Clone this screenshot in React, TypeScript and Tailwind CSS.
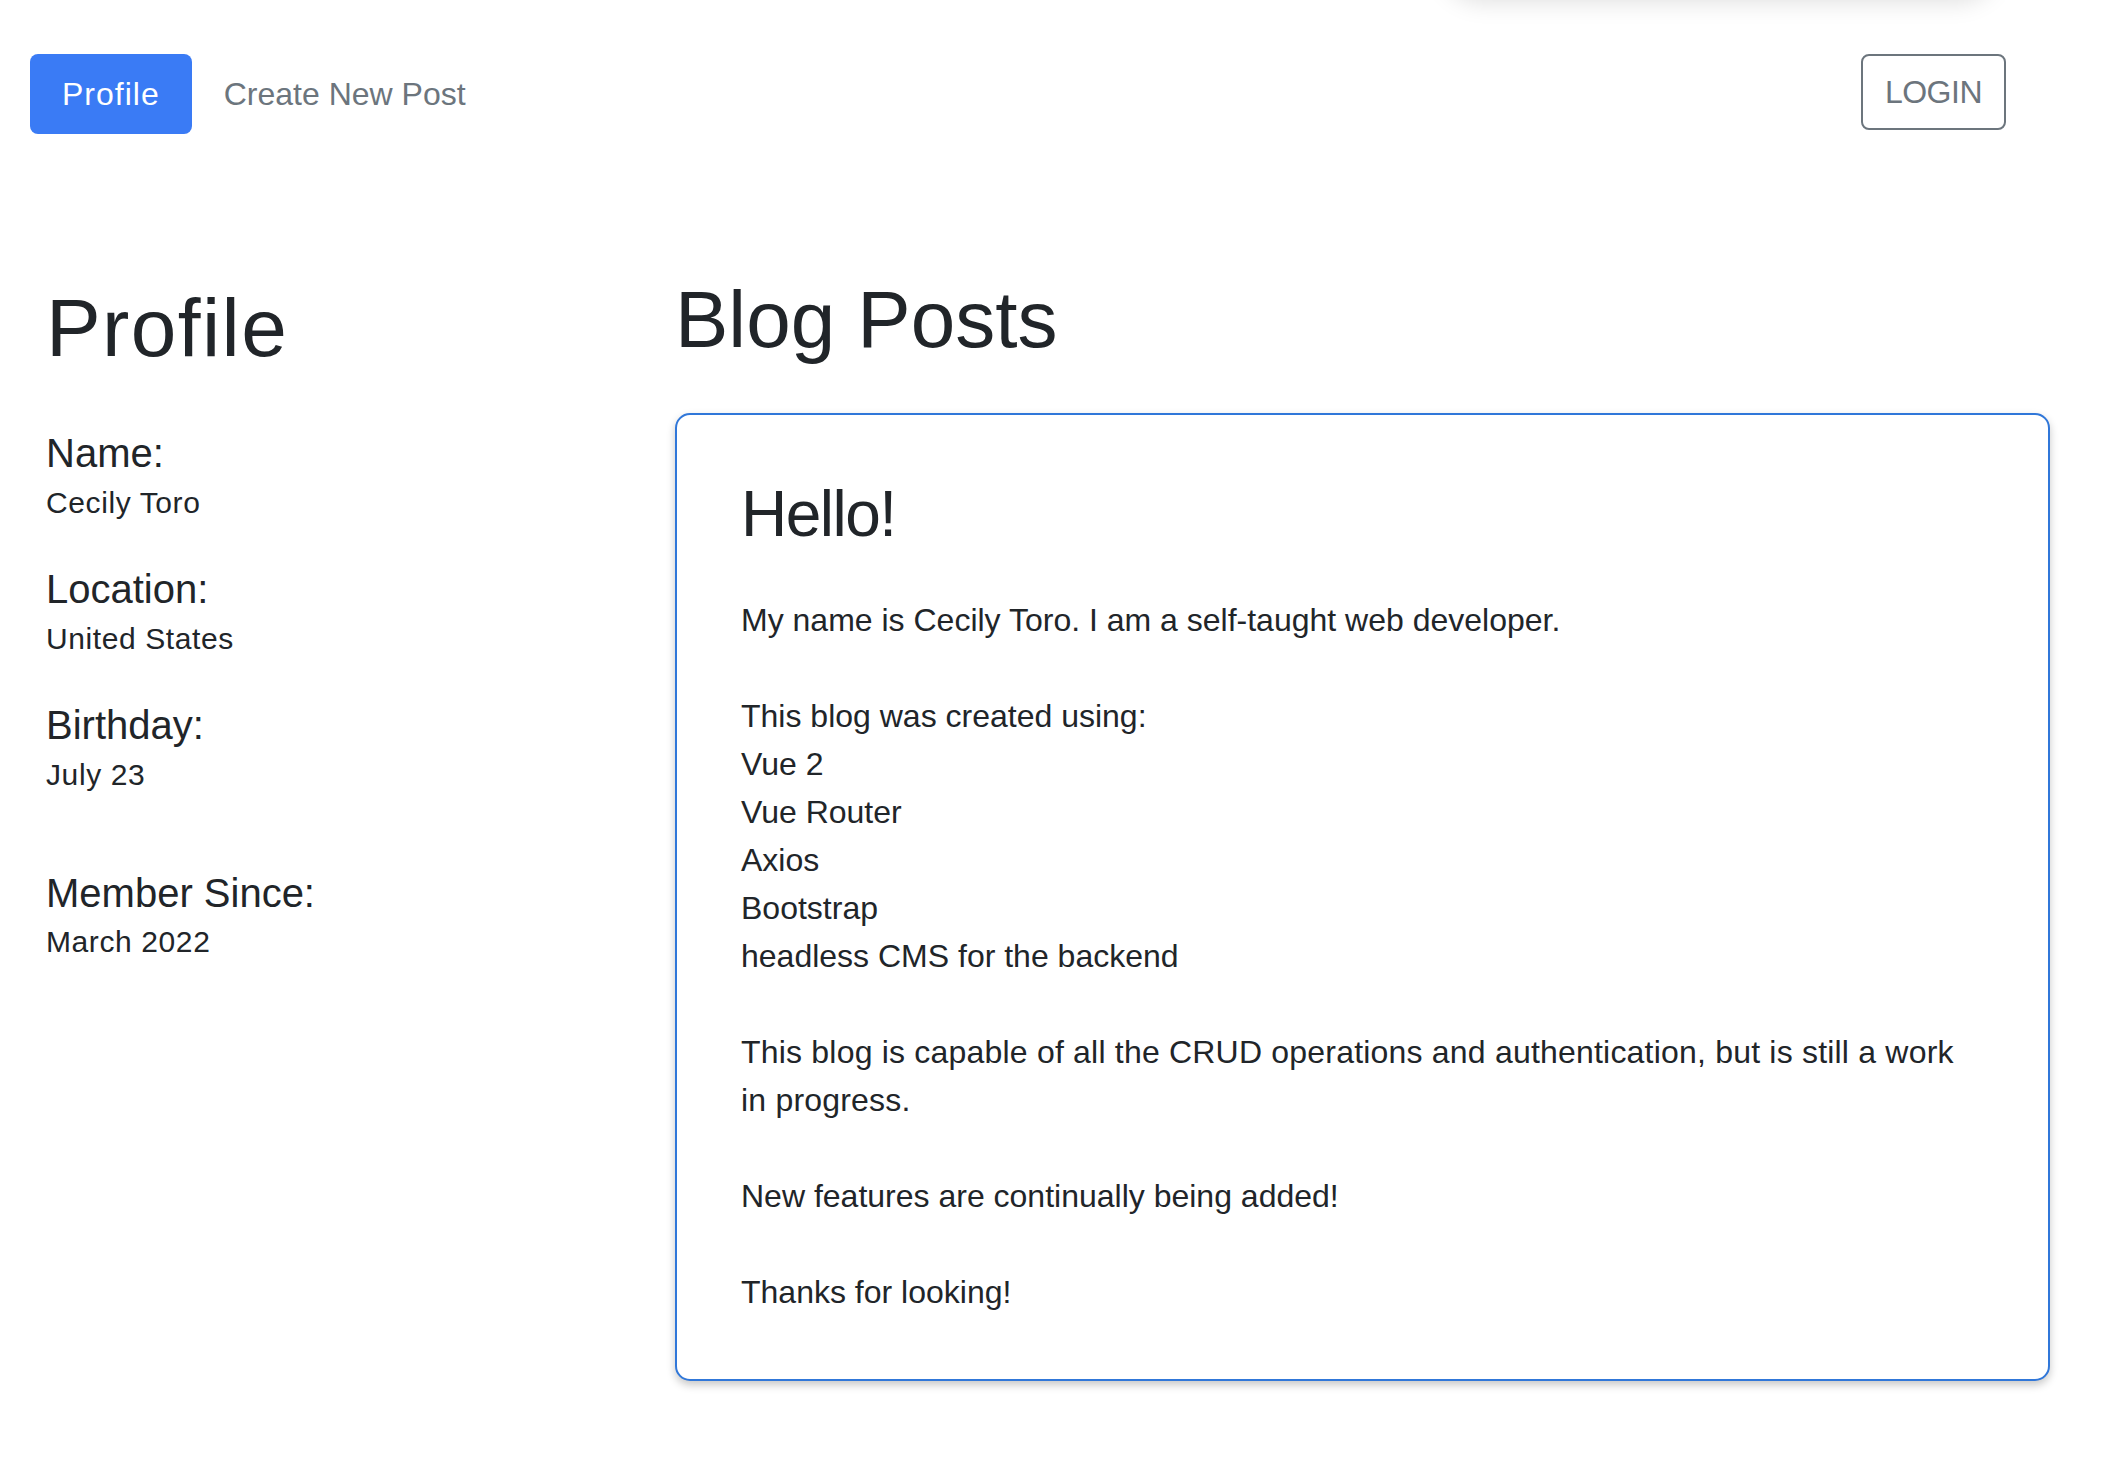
import React from "react";

export default function App() {
  return (
    <div className="relative min-h-[1458px] w-[2108px] overflow-hidden bg-white font-['Liberation_Sans',Arial,sans-serif] text-[#212529]">
      {/* shadow of an element sitting just above the viewport */}
      <div className="absolute left-[1442px] top-[-120px] h-[120px] w-[556px] rounded-[40px] bg-white shadow-[0_2px_24px_rgba(0,0,0,0.13)]" />

      {/* Nav */}
      <nav className="flex items-start justify-between pl-[30px] pr-[102px] pt-[54px]">
        <div className="flex items-start">
          <a className="rounded-[8px] bg-[#3a7bf5] px-[32px] py-[16px] text-[32px] leading-[48px] tracking-[1px] text-white">
            Profile
          </a>
          <a className="px-[32px] py-[16px] text-[32px] leading-[48px] text-[#6c757d]">
            Create New Post
          </a>
        </div>
        <button className="rounded-[8px] border-2 border-[#6c757d] px-[22px] py-[12px] text-[32px] leading-[48px] tracking-[-0.5px] text-[#6c757d]">
          LOGIN
        </button>
      </nav>

      {/* Main */}
      <main className="flex pl-[46px]">
        <section className="w-[629px] shrink-0 pt-[146px]">
          <h1 className="text-[82px] leading-[96px] tracking-[1.4px]">Profile</h1>
          <div className="mt-[53px] flex flex-col">
            <div className="mb-[41px]">
              <div className="mb-[5px] text-[40px] leading-[48px]">Name:</div>
              <div className="text-[30px] leading-[42px] tracking-[0.6px]">Cecily Toro</div>
            </div>
            <div className="mb-[41px]">
              <div className="mb-[5px] text-[40px] leading-[48px]">Location:</div>
              <div className="text-[30px] leading-[42px] tracking-[0.6px]">United States</div>
            </div>
            <div className="mb-[73px]">
              <div className="mb-[5px] text-[40px] leading-[48px]">Birthday:</div>
              <div className="text-[30px] leading-[42px] tracking-[0.6px]">July 23</div>
            </div>
            <div>
              <div className="mb-[4px] text-[40px] leading-[48px]">Member Since:</div>
              <div className="text-[30px] leading-[42px] tracking-[0.6px]">March 2022</div>
            </div>
          </div>
        </section>

        <section className="w-[1375px] shrink-0 pt-[138px]">
          <h1 className="text-[80px] leading-[96px]">Blog Posts</h1>
          <div className="mt-[45px] rounded-[15px] border-2 border-[#3077d9] bg-white px-[64px] pb-[63px] pt-[61px] shadow-[0_4px_8px_rgba(0,0,0,0.22)]">
            <h2 className="mb-[43px] text-[64px] leading-[77px] tracking-[-1.5px]">Hello!</h2>
            <div className="text-[32px] leading-[48px]">
              <p className="mb-[48px]">My name is Cecily Toro. I am a self-taught web developer.</p>
              <p className="mb-[48px]">
                This blog was created using:
                <br />
                Vue 2
                <br />
                Vue Router
                <br />
                Axios
                <br />
                Bootstrap
                <br />
                headless CMS for the backend
              </p>
              <p className="mb-[48px] max-w-[1228px] tracking-[0.2px]">
                This blog is capable of all the CRUD operations and authentication, but is still a work in progress.
              </p>
              <p className="mb-[48px]">New features are continually being added!</p>
              <p>Thanks for looking!</p>
            </div>
          </div>
        </section>
      </main>
    </div>
  );
}
